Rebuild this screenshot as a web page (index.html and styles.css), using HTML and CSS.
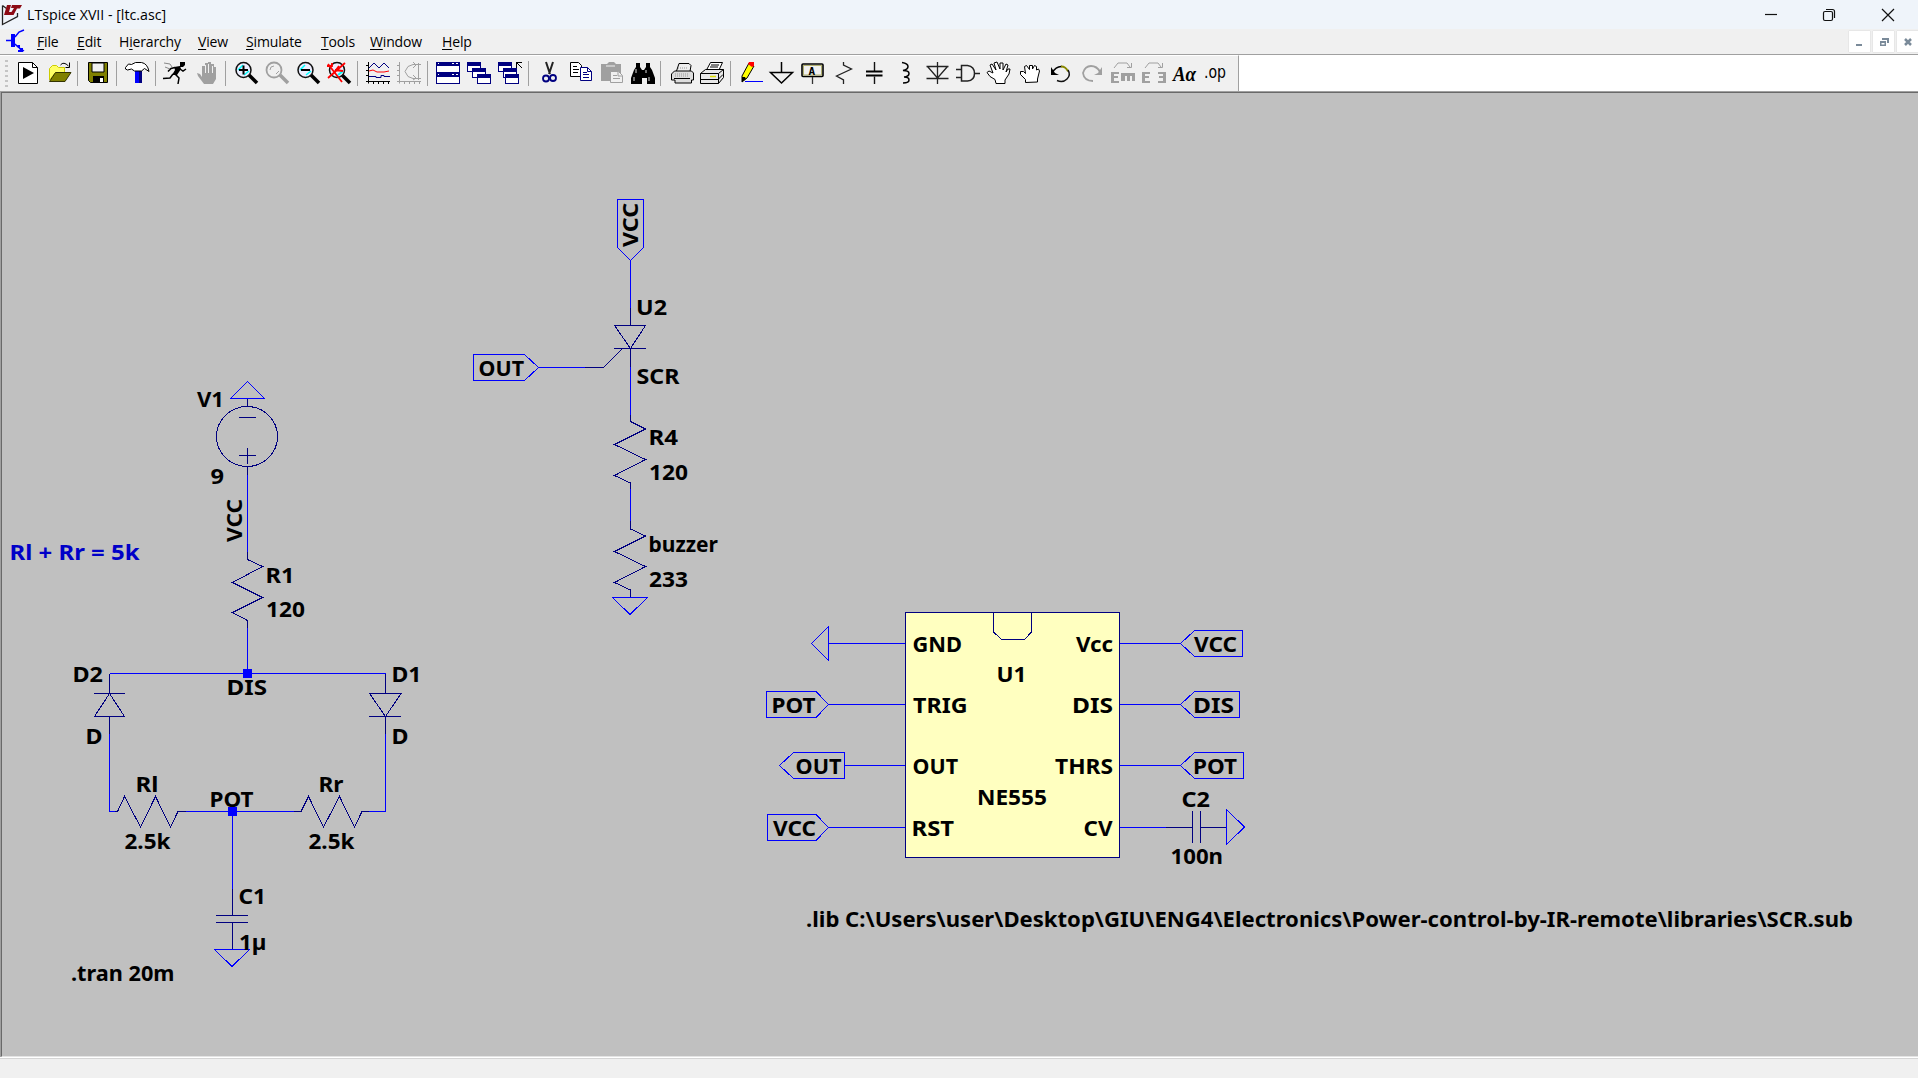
FILE: index.html
```html
<!DOCTYPE html>
<html lang="en">
<head>
<meta charset="utf-8">
<title>LTspice XVII - [ltc.asc]</title>
<link rel="stylesheet" href="styles.css">
</head>
<body>
<div class="app">
<header class="titlebar">
  <svg class="logo" width="22" height="28" viewBox="0 0 22 28"><path d="M2.500 4.500V23.500l15-8V12M2.500 4.500l4 3" fill="none" stroke="#222" stroke-width="1.300"/><path d="M7 4h4l-2 7h3l-1 3H4zM12 4h10l-2 3.500h-3L13.500 14h-4l4.500-7h-3z" fill="#8c0a14"/></svg>
  <h1 class="title">LTspice XVII - [ltc.asc]</h1>
  <div class="winbtns">
    <svg width="58" height="28" viewBox="0 0 58 28"><path d="M13 13.500h12" class="w"/></svg>
    <svg width="58" height="28" viewBox="0 0 58 28"><rect x="13.500" y="10.500" width="9" height="9" rx="1.500" class="w"/><path d="M16 8.500h6.500q2 0 2 2V17" class="w"/></svg>
    <svg width="50" height="28" viewBox="0 0 50 28"><path d="M14 8l12 12M26 8L14 20" class="w"/></svg>
  </div>
</header>
<nav class="menubar">
  <svg class="docicon" width="20" height="24" viewBox="0 0 20 24"><path d="M0 11.500h7M9 8l4-5 5-2M9 15l3 3 6 4" fill="none" stroke="#00f" stroke-width="1.500"/><path d="M5 5h4v13H5zM11 16h3v3h3v4h-5v-2h2z" fill="#00f"/></svg>
  <div class="menus">
    <span><u>F</u>ile</span><span><u>E</u>dit</span><span>H<u>i</u>erarchy</span><span><u>V</u>iew</span><span><u>S</u>imulate</span><span><u>T</u>ools</span><span><u>W</u>indow</span><span><u>H</u>elp</span>
  </div>
  <div class="mdi">
    <b><svg width="21" height="21" viewBox="0 0 21 21"><path d="M7 13h6v2H7z"/></svg></b>
    <b><svg width="21" height="21" viewBox="0 0 21 21"><path d="M9 7h7v5h-2V9H9zM7 10h6v5H7zM8.500 12v1.500h3V12z" fill-rule="evenodd"/></svg></b>
    <b><svg width="21" height="21" viewBox="0 0 21 21"><path d="M8 8l6 6M14 8l-6 6" stroke="#7a8a99" stroke-width="2.500"/></svg></b>
  </div>
</nav>
<div class="toolrow">
<div class="toolbar">
  <i class="grip"></i>
  <svg viewBox="0 0 31 24"><path d="M5.500 1.500h14l5 5v16h-19z" fill="#fff" stroke="#000"/><path d="M19.500 1.500v5h5" class="k"/><path d="M10 6l11 6-11 6z"/></svg>
  <svg viewBox="0 0 31 24"><path d="M5.500 19V7.500l3-3h4l2 2h6v5h-9z" fill="#ff6" stroke="#cc0"/><path d="M5.500 20.500l6-9h15.500l-6 9z" fill="#808000" stroke="#333300"/><path d="M16.500 4q3-4 8 1M25.500 1.500v5h-4" class="k"/></svg>
  <i class="sep"></i>
  <svg viewBox="0 0 31 24"><path d="M5.500 1.500h19v20h-17l-2-2z" fill="#808000" stroke="#000"/><path d="M9 2h12v9H9z" fill="#f0f0f0" stroke="#000"/><path d="M10 15h11v7H10z"/><path d="M17 17h3v4h-3z" fill="#fff"/></svg>
  <i class="sep"></i>
  <svg viewBox="0 0 31 24"><path d="M13 9h6v13h-6z" fill="#00f"/><path d="M17 9h3v13h-3z" fill="#000080"/><path d="M3.500 6.500l3-3.500 3 .5 4-2h6q6 1 7.500 9l-4.500-3-3 2.500h-7l-3-2-4 1-2-1z" fill="#fff" stroke="#000"/></svg>
  <i class="sep"></i>
  <svg viewBox="0 0 31 24"><path d="M19 1h5v3l-2 2h-3z"/><path d="M13 6l6-1 1 3-4 6h-5l3-5z"/><path d="M14 6.500l-4 1-3 3M19 8l3 2 3-2M14 13l4 4-1 6M12 13l-3 4-7 .5" class="k" stroke-width="1.500"/><path d="M3 2l6 1 2 3M4 6l5 2" fill="none" stroke="#888"/></svg>
  <svg viewBox="0 0 31 24"><path d="M5 12l3 1 2 3V5h3V2h3V1h3v2h3v3h2v12l-3 5H12l-6-8z" fill="#a0a0a0"/><path d="M13.500 4v8M16.500 3v9M20.500 5v7" stroke="#f0f0f0" fill="none"/></svg>
  <i class="sep"></i>
  <svg viewBox="0 0 31 24"><path d="M18 14l8 8" stroke="#000" stroke-width="3.500"/><circle cx="12.500" cy="9" r="7.500" fill="#eef" stroke="#111" stroke-width="1.500"/><path d="M7 9l5-5M13 14l5-4" stroke="#0ff" stroke-width="1.500"/><path d="M8 9h9M12.500 4.500v9" stroke="#000" stroke-width="2"/></svg>
  <svg viewBox="0 0 31 24"><path d="M18 14l8 8" stroke="#a0a0a0" stroke-width="3.500"/><circle cx="12" cy="9" r="7.500" fill="none" stroke="#a0a0a0" stroke-width="1.800"/><path d="M8 9q0-4 4-4M14 13l3-3" fill="none" stroke="#a0a0a0"/></svg>
  <svg viewBox="0 0 31 24"><path d="M18 14l8 8" stroke="#000" stroke-width="3.500"/><circle cx="12.500" cy="9" r="7.500" fill="#eef" stroke="#111" stroke-width="1.500"/><path d="M7 9l5-5M13 14l5-4" stroke="#0ff" stroke-width="1.500"/><path d="M8 9h9" stroke="#000" stroke-width="2"/></svg>
  <svg viewBox="0 0 31 24"><path d="M18 14l8 8" stroke="#000" stroke-width="3.500"/><circle cx="13" cy="9" r="7.500" fill="#eef" stroke="#111" stroke-width="1.500"/><path d="M14 14l5-4" stroke="#0ff" stroke-width="2"/><path d="M4 3l14 18M21 2L4 17M3 5h5M8 2v4M9 13l6-8M11 9l8 1" stroke="#f00" stroke-width="1.800" fill="none"/></svg>
  <i class="sep"></i>
  <svg viewBox="0 0 31 24"><path d="M5.500 1v21.500M3 20.500h24M3 4.500h3M3 9.500h3M3 14.500h3M10.500 20v3M15.500 20v3M20.500 20v3M25.500 20v3" class="k"/><path d="M6 7l5-5 5 5 5-5 5 5M6 15.500h7v1h5v-2h3v1h6" fill="none" stroke="#000080"/><path d="M6 10l4-1 4 2h7l5-1" fill="none" stroke="#f00"/></svg>
  <svg viewBox="0 0 31 24"><path d="M5.500 1v21.500M3 20.500h24M3 4.500h3M3 9.500h3M3 14.500h3M10.500 20v3M15.500 20v3M20.500 20v3M25.500 20v3M24.500 2v17M27 3.500h-8l-5 2-3 5 3 5 5 2h8M19 1l3 3-3 3M19 14l3 3-3 2" fill="none" stroke="#a0a0a0"/></svg>
  <i class="sep"></i>
  <svg viewBox="0 0 31 24" class="crisp"><g id="tile"><path d="M3.500 1.500h23v10h-23z" fill="#fff" stroke="#000080"/><path d="M3 1h24v4H3z" fill="#000080"/><path d="M19 2h2v1h-2zM23 2h2v1h-2zM5 2h1v1H5z" fill="#fff"/></g><use href="#tile" y="11"/></svg>
  <svg viewBox="0 0 31 24" class="crisp"><g id="win"><path d="M3.500 1.500h13v9h-13z" fill="#fff" stroke="#000080"/><path d="M3 1h14v4H3z" fill="#000080"/></g><use href="#win" x="5" y="6"/><use href="#win" x="10" y="12"/></svg>
  <svg viewBox="0 0 31 24" class="crisp"><use href="#win"/><use href="#win" x="5" y="6"/><use href="#win" x="7" y="12"/><path d="M21.500 7V1.500H27M22 2l5 5" class="k"/></svg>
  <i class="sep"></i>
  <svg viewBox="0 0 31 24"><path d="M12 1l4 12M19 1l-4 12" stroke="#222" stroke-width="2"/><circle cx="12" cy="17.500" r="3" fill="none" stroke="#000080" stroke-width="1.800"/><circle cx="19" cy="17" r="3" fill="none" stroke="#000080" stroke-width="1.800"/></svg>
  <svg viewBox="0 0 31 24"><path d="M5.500 1.500h8l3 3v11h-11z" fill="#fff" stroke="#000"/><path d="M8 5.500h4M8 8.500h6M8 11.500h5" class="k"/><path d="M15.500 6.500h7l4 4v9h-11z" fill="#fff" stroke="#000080"/><path d="M22.500 6.500v4h4M18 11.500h4M18 13.500h6M18 16.500h6" stroke="#000080" fill="none"/></svg>
  <svg viewBox="0 0 31 24"><path d="M5 3h6l2-2h5l2 2h5v17H5z" fill="#a0a0a0"/><path d="M10 5h9" stroke="#f0f0f0"/><path d="M14.500 10.500h8l4 4v7h-12z" fill="#f0f0f0" stroke="#a0a0a0"/><path d="M17 14.500h4M17 17.500h7M22 11v4h4" fill="none" stroke="#a0a0a0"/></svg>
  <svg viewBox="0 0 31 24"><path d="M9 2h4v4l2 3h2l2-3V2h4v4l2 3 3 8v6h-8v-6h-5v6H4v-6l3-8 2-3z"/><path d="M9 8v4M19 9v3M7 16v4M22 16v4" stroke="#ddd"/></svg>
  <i class="sep"></i>
  <svg viewBox="0 0 31 24"><path d="M10.500 10L13 2.500h10l2 2-1 6" fill="#eee" stroke="#000"/><path d="M5.500 13l3-3h17l2 2v7h-2v3H9v-3H5.500z" fill="#ddd" stroke="#000"/><path d="M8 17.500h16" class="k"/><path d="M12 7h9M9 13h14M9 15h14" stroke="#999" stroke-dasharray="1 1"/></svg>
  <svg viewBox="0 0 31 24"><path d="M9.500 9l4-7.500h12L22 9" fill="#fff" stroke="#000"/><path d="M3.500 12.500l5-4h18v8l-5 6h-18z" fill="#e8e8e8" stroke="#000"/><path d="M3.500 12.500h18v10M21.500 12.500l5-4M4 18.500h17l5-5M14 4h8M13 6h8" class="k"/><path d="M13 15.500h6" stroke="#dd0" stroke-width="1.500"/></svg>
  <i class="sep"></i>
  <svg viewBox="0 0 31 24"><path d="M6 21v-6l7-13 5 3-7 12z" fill="#ff0" stroke="#000"/><path d="M13 1h5v4l-2 1-4-3z" fill="#f00"/><path d="M6 16h3l1 2-4 3z"/><path d="M9 20.500h18" stroke="#00f"/></svg>
  <svg viewBox="0 0 31 24"><path d="M14.500 1v10M3.500 11.500h22L14.500 22z" fill="none" stroke="#000" stroke-width="1.500"/></svg>
  <svg viewBox="0 0 31 24"><rect x="4" y="3" width="21" height="12.500" rx="1" fill="#f0f0f0" stroke="#000" stroke-width="1.600"/><rect x="5.500" y="4.500" width="18" height="9.500" fill="none" stroke="#b0b070"/><path d="M14.500 16v7" stroke="#333" stroke-width="1.300"/><text x="10.500" y="13.500" class="la">A</text></svg>
  <svg viewBox="0 0 31 24"><path d="M14.500 1v3l8 4L7.500 15l7 4v4" fill="none" stroke="#222" stroke-width="1.300"/></svg>
  <svg viewBox="0 0 31 24"><path d="M14.500 1v9M14.500 15.500V23" stroke="#111" stroke-width="1.400"/><path d="M6 10.500h16.500M6 14.500h16.500" stroke="#000" stroke-width="2"/></svg>
  <svg viewBox="0 0 31 24"><path d="M11 1.500q6 1 6 4t-5 4q6 0 6 3t-5 3.500q5 0 5 3t-6 3" fill="none" stroke="#000" stroke-width="1.500"/></svg>
  <svg viewBox="0 0 31 24"><path d="M15.500 1v22M4.500 5.500h22M5.500 5.500l10 11.500 10-11.500M4.500 17.500h22" fill="none" stroke="#222" stroke-width="1.300"/></svg>
  <svg viewBox="0 0 31 24"><path d="M3 8.500h5M3 16.500h5M8.500 4.500h6q7 1 7 8t-7 7.500h-6zM21 12.500h6" fill="none" stroke="#222" stroke-width="1.500"/></svg>
  <svg viewBox="0 0 31 24"><path d="M12 22.500l-1-4-5-3-3-4 2-1.500 4 2L6 4l2-1 4 6-2-7 3-1 3 7V2h3v7l3-6 2 1-2 7 2-3h2l-1 5-4 6v3.500z" fill="#fff" stroke="#000"/></svg>
  <svg viewBox="0 0 31 24"><path d="M10.500 21.500v-3l-5-5v-3h3l2 2-1-7 2-1 3 4V4.500h3V8l2-3.500 2 1v3.500l2-1 1 2-2 8v3z" fill="#fff" stroke="#000"/></svg>
  <svg viewBox="0 0 31 24"><path d="M6 12q4-7 10-6.500" fill="none" stroke="#000" stroke-width="1.500"/><path d="M15 5.500q5 0 7 5" fill="none" stroke="#880" stroke-width="1.800"/><path d="M22 9q3 5-1 9t-10 1.500" fill="none" stroke="#111" stroke-width="1.500"/><path d="M5 6v8h8l-4-2z"/></svg>
  <svg viewBox="0 0 31 24"><path d="M23 11q-3-6-9-6T6 12q1 8 10 8" fill="none" stroke="#a0a0a0" stroke-width="1.800"/><path d="M25 6v8h-8l4-2z" fill="#a0a0a0"/></svg>
  <svg viewBox="0 0 31 24"><path d="M6 7l4-5h9l3 4M23.500 2v4.500H19" fill="none" stroke="#a0a0a0"/><path d="M3 11h8v2H6v2h4v2H6v3h5v2H3zM13 12h14v8h-3v-5h-2v5h-3v-5h-2v5h-4z" fill="#a0a0a0"/></svg>
  <svg viewBox="0 0 31 24"><path d="M6 7l4-5h9l3 4M23.500 2v4.500H19" fill="none" stroke="#a0a0a0"/><path d="M3 11h8v2H6v2h4v2H6v3h5v2H3zM27 11h-8v2h5v2h-4v2h4v3h-5v2h8z" fill="#a0a0a0"/></svg>
  <svg viewBox="0 0 31 24"><text x="3" y="20" class="aa" textLength="23" lengthAdjust="spacingAndGlyphs">Aα</text></svg>
  <svg viewBox="0 0 31 24"><text x="3" y="17" class="op" textLength="22" lengthAdjust="spacingAndGlyphs">.op</text></svg>
</div>
</div>
<main class="sheet">
<svg class="schematic" viewBox="2 93 1916 963" width="1916" height="963">
  <g class="wire">
    <path d="M247.500 475v77M247.500 627v46M109.500 673.500h276M109.500 734v77.500h6M186 811.500h108M369 811.500h16.500V734M232.500 811v78"/>
    <path d="M230.500 398.500h34l-17-17zM214.500 949.500h35l-17.500 17zM612.500 597.500h35l-17.500 17zM828.500 626.500v34l-17-17zM1226.500 809.500v35l18-17.500z"/>
    <path d="M630.500 260v48M538 367.500h47M630.500 367v48M630.500 489v32M829 643.500h76M829 704.500h76M845 765.500h60M829 827.500h76M1120 643.500h61M1120 704.500h61M1120 765.500h61M1120 827.500h46"/>
    <path d="M617.500 199.500h26v48l-13 13-13-13zM473.500 354.500h51l14 13-14 13h-51zM766.500 691.500h49.500l12.500 13-12.500 13h-49.500zM844.500 752.500h-51l-14 13 14 13h51zM767.500 814.500h48.500l12.500 13-12.500 13h-48.500zM1242.500 630.500h-48l-14 13 14 13h48zM1239.500 691.500h-45l-14 13 14 13h45zM1243.500 752.500h-49l-14 13 14 13h49z"/>
  </g>
  <g class="part">
    <path d="M247.500 399v7M239 417.500h17M239 455.500h17M247.500 448v16M247.500 466v9"/><ellipse cx="247" cy="436.500" rx="30.500" ry="30"/>
    <path d="M247.500 552v7.500l15 7-30 16 30 15-30 15 15 8v7"/>
    <path d="M109.500 674v19.500M94 693.500h31M109.500 693.500l-15 23h30zM109.500 716v18"/>
    <path d="M385.500 674v19.500M369.500 693.500h31.500l-15.500 23zM369 716.500h32M385.500 716v18"/>
    <path d="M115 811.500h2.500l7-15 16 30.500 15-30.500 15 30.500 7.500-15.500h8M294 811.500h7l7.500-15 15 30.500 16-30.500 15 30.500 7.500-15.500h7"/>
    <path d="M232.500 889v26.500M216 915.500h32M216 922.500h32M232.500 923v26"/>
    <path d="M630.500 308v17.500M614.500 325.500h31l-15 23zM614 348.500h32M622.500 348.500l-19 19H585M630.500 348v19"/>
    <path d="M630.500 415v6.500l15 7.500-31 15.500 31 15-31 16 16 7.500v6M630.500 521v8l15 7-31 15.500 31 15-31 16 16 7.500v7"/>
    <rect x="905.500" y="612.500" width="214" height="245" class="chip"/>
    <path d="M993.500 612v20l8 7.500h23l7-7.500v-20M1166 827.500h26.500M1192.500 811v32M1200.500 811v32M1201 827.500h25"/>
  </g>
  <g class="label">
    <text x="197" y="406.500" textLength="27" lengthAdjust="spacingAndGlyphs">V1</text>
    <text x="210.500" y="484" textLength="13.500" lengthAdjust="spacingAndGlyphs">9</text>
    <text transform="translate(242 542) rotate(-90)" textLength="43" lengthAdjust="spacingAndGlyphs">VCC</text>
    <text x="9.500" y="560" textLength="130" lengthAdjust="spacingAndGlyphs" class="note">Rl + Rr = 5k</text>
    <text x="265.500" y="583" textLength="29" lengthAdjust="spacingAndGlyphs">R1</text>
    <text x="266" y="617" textLength="39" lengthAdjust="spacingAndGlyphs">120</text>
    <text x="72.500" y="682" textLength="30.500" lengthAdjust="spacingAndGlyphs">D2</text>
    <text x="391.500" y="682" textLength="30" lengthAdjust="spacingAndGlyphs">D1</text>
    <text x="226.500" y="695" textLength="40.500" lengthAdjust="spacingAndGlyphs">DIS</text>
    <text x="85.500" y="744" textLength="17" lengthAdjust="spacingAndGlyphs">D</text>
    <text x="391.500" y="744" textLength="17" lengthAdjust="spacingAndGlyphs">D</text>
    <text x="135.500" y="792" textLength="23" lengthAdjust="spacingAndGlyphs">Rl</text>
    <text x="318.500" y="792" textLength="25" lengthAdjust="spacingAndGlyphs">Rr</text>
    <text x="209.500" y="807" textLength="44" lengthAdjust="spacingAndGlyphs">POT</text>
    <text x="124.500" y="849" textLength="46" lengthAdjust="spacingAndGlyphs">2.5k</text>
    <text x="308.500" y="849" textLength="46" lengthAdjust="spacingAndGlyphs">2.5k</text>
    <text x="238.500" y="904" textLength="27.500" lengthAdjust="spacingAndGlyphs">C1</text>
    <text x="239" y="950" textLength="27.500" lengthAdjust="spacingAndGlyphs">1µ</text>
    <text x="71" y="981" textLength="103.500" lengthAdjust="spacingAndGlyphs">.tran 20m</text>
    <text transform="translate(638 247) rotate(-90)" textLength="44" lengthAdjust="spacingAndGlyphs">VCC</text>
    <text x="478.500" y="375.500" textLength="45.500" lengthAdjust="spacingAndGlyphs">OUT</text>
    <text x="636" y="315" textLength="31" lengthAdjust="spacingAndGlyphs">U2</text>
    <text x="636.500" y="384" textLength="43" lengthAdjust="spacingAndGlyphs">SCR</text>
    <text x="648.500" y="445" textLength="29.500" lengthAdjust="spacingAndGlyphs">R4</text>
    <text x="649" y="480" textLength="39" lengthAdjust="spacingAndGlyphs">120</text>
    <text x="648.500" y="552" textLength="69.500" lengthAdjust="spacingAndGlyphs">buzzer</text>
    <text x="649" y="587" textLength="39" lengthAdjust="spacingAndGlyphs">233</text>
    <text x="912.500" y="651.500" textLength="49.500" lengthAdjust="spacingAndGlyphs">GND</text>
    <text x="913" y="712.500" textLength="54.500" lengthAdjust="spacingAndGlyphs">TRIG</text>
    <text x="912.500" y="773.500" textLength="45.500" lengthAdjust="spacingAndGlyphs">OUT</text>
    <text x="911.500" y="836" textLength="42.500" lengthAdjust="spacingAndGlyphs">RST</text>
    <text x="1076" y="651.500" textLength="37" lengthAdjust="spacingAndGlyphs">Vcc</text>
    <text x="1072" y="712.500" textLength="41" lengthAdjust="spacingAndGlyphs">DIS</text>
    <text x="1055" y="773.500" textLength="58" lengthAdjust="spacingAndGlyphs">THRS</text>
    <text x="1083.500" y="836" textLength="29" lengthAdjust="spacingAndGlyphs">CV</text>
    <text x="996.500" y="681.500" textLength="30" lengthAdjust="spacingAndGlyphs">U1</text>
    <text x="977" y="804.500" textLength="70" lengthAdjust="spacingAndGlyphs">NE555</text>
    <text x="771.500" y="712.500" textLength="44" lengthAdjust="spacingAndGlyphs">POT</text>
    <text x="795.500" y="773.500" textLength="46" lengthAdjust="spacingAndGlyphs">OUT</text>
    <text x="773" y="836" textLength="43" lengthAdjust="spacingAndGlyphs">VCC</text>
    <text x="1194" y="651.500" textLength="43" lengthAdjust="spacingAndGlyphs">VCC</text>
    <text x="1193" y="712.500" textLength="41" lengthAdjust="spacingAndGlyphs">DIS</text>
    <text x="1193" y="773.500" textLength="44" lengthAdjust="spacingAndGlyphs">POT</text>
    <text x="1181.500" y="807" textLength="28.500" lengthAdjust="spacingAndGlyphs">C2</text>
    <text x="1170.500" y="864" textLength="52.500" lengthAdjust="spacingAndGlyphs">100n</text>
    <text x="806" y="926.500" textLength="1047" lengthAdjust="spacingAndGlyphs">.lib C:\Users\user\Desktop\GIU\ENG4\Electronics\Power-control-by-IR-remote\libraries\SCR.sub</text>
  </g>
  <g class="node"><path d="M243 669h9v9h-9zM228 807h9v9h-9z"/></g>
</svg>
</main>
<footer class="status"></footer>
</div>
</body>
</html>
```
FILE: styles.css
```css
* { box-sizing: border-box; }
body { margin: 0; background: #f0f0f0; color: #000; font-family: "Open Sans", "Noto Sans", sans-serif; }
.app { display: flex; flex-direction: column; width: 1918px; height: 1078px; overflow: hidden; }
.titlebar { display: flex; align-items: center; height: 29px; background: #eff4fa; }
.title { margin: 0 0 0 5px; font-size: 14.2px; font-weight: 400; letter-spacing: 0; line-height: 28px; }
.winbtns { display: flex; margin-left: auto; }
.w { fill: none; stroke: #111; stroke-width: 1.2; }
.menubar { display: flex; height: 25px; background: #f0f0f0; padding-left: 6px; }
.menus { display: grid; grid-template-columns: 40px 42px 79px 48px 75px 49px 72px 40px; margin-left: 11px; font-size: 14px; letter-spacing: -0.15px; line-height: 25px; white-space: nowrap; }
.menus u { text-underline-offset: 2px; text-decoration-thickness: 1px; }
.mdi { display: flex; gap: 3px; margin-left: auto; padding-top: 2px; }
.mdi b { width: 21px; height: 21px; background: #fff; box-shadow: 0 0 1px #bbb; }
.mdi svg { display: block; fill: #7a8a99; }
.toolrow { height: 38px; background: #fff; border-top: 1px solid #a0a0a0; border-bottom: 1px solid #a0a0a0; }
.toolbar { display: flex; align-items: flex-start; width: 1239px; height: 36px; padding-top: 6px; background: #f0f0f0; border-top: 1px solid #fff; border-right: 1px solid #a0a0a0; }
.toolbar svg { width: 31px; height: 24px; flex: none; margin-top: -1px; }
.grip { width: 3px; height: 28px; margin: -2px 5px 0 5px; background: repeating-linear-gradient(#c4c4c4 0 2px, transparent 2px 5px); }
.sep { width: 8px; height: 25px; margin-top: -1px; background: linear-gradient(#a0a0a0, #a0a0a0) 2px 0 / 1px 100% no-repeat; }
.k { fill: none; stroke: #000; }
.crisp { shape-rendering: crispEdges; }
.la { font: bold 11px "DejaVu Sans Mono", monospace; }
.aa { font: italic bold 20px "Liberation Serif", serif; }
.op { font: 17px "DejaVu Sans Condensed", sans-serif; }
.sheet { height: 965px; background: #c0c0c0; border-top: 1px solid #696969; border-left: 1px solid #696969; border-bottom: 1px solid #e3e3e3; box-shadow: -1px 0 #a0a0a0; margin-left: 1px; }
.schematic { display: block; }
.wire, .part { fill: none; stroke-width: 1; shape-rendering: crispEdges; }
.wire { stroke: #0000ff; }
.part { stroke: #000080; }
.chip { fill: #ffffc0; }
.node { fill: #0000ff; }
.label { font: bold 21.5px "Noto Sans", "DejaVu Sans", sans-serif; fill: #000; }
.note { fill: #0000c8; }
.status { flex: 1; background: #f0f0f0; border-top: 1px solid #fff; box-shadow: inset 0 1px #d5d5d5; }
```
